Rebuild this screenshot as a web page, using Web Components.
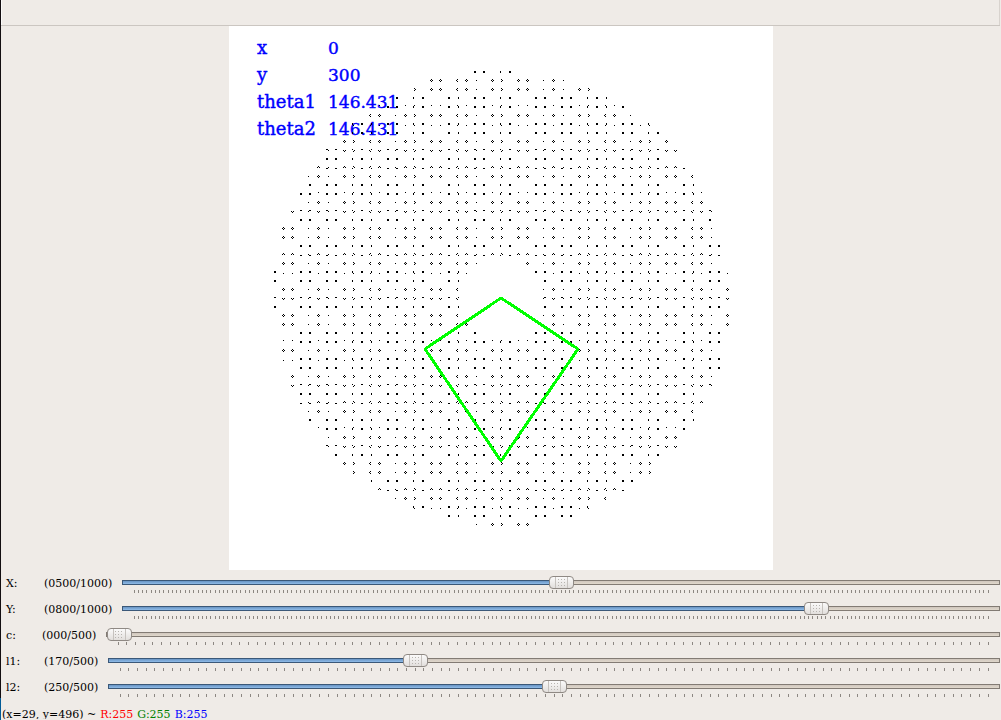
<!DOCTYPE html>
<html lang="en">
<head>
<meta charset="utf-8">
<title>Five-bar linkage</title>
<style>
html, body { margin: 0; background: #efebe7; }
body { font: 11px/16px "DejaVu Serif", serif; color: #000; }
</style>
</head>
<body>
<viewer-window>
  <tool-strip slot="tools"></tool-strip>
  <linkage-plot slot="view" x="0" y="300" theta1="146.431" theta2="146.431"></linkage-plot>
  <track-bar name="X" value="500" max="1000"></track-bar>
  <track-bar name="Y" value="800" max="1000"></track-bar>
  <track-bar name="c" value="0" max="500"></track-bar>
  <track-bar name="l1" value="170" max="500"></track-bar>
  <track-bar name="l2" value="250" max="500"></track-bar>
  <pixel-status slot="status"></pixel-status>
</viewer-window>
<script>
customElements.define('viewer-window', class extends HTMLElement {
  constructor() {
    super();
    this.attachShadow({ mode: 'open' }).innerHTML = `
      <style>
        :host { display: grid; grid-template-columns: 1px minmax(0, 1fr) 1px; }
        .edge { background: linear-gradient(#120d10 0 698px, #005a96 698px); }
        main { display: flex; flex-direction: column; }
      </style>
      <div class="edge"></div>
      <main>
        <slot name="tools"></slot>
        <slot name="view"></slot>
        <slot></slot>
        <slot name="status"></slot>
      </main>`;
  }
});

customElements.define('tool-strip', class extends HTMLElement {
  constructor() {
    super();
    this.attachShadow({ mode: 'open' }).innerHTML = `
      <style>
        :host { display: block; height: 25px; border-bottom: 1px solid #cbc6c1; }
        div { height: 100%; border-left: 1px solid #fbfaf9; border-right: 1px solid #d8d3ce; }
      </style><div></div>`;
  }
});

customElements.define('linkage-plot', class extends HTMLElement {
  connectedCallback() {
    const size = 544, world = 1000;
    const sample = p => Math.floor((p + 0.5) * world / size);
    // Reachable grid points between radius l2-l1 and l1+l2, each a small diamond ring.
    const on = (u, v) => {
      const gx = Math.round((u - 500) / 16) * 16, gy = Math.round((v - 500) / 16) * 16;
      const r = Math.hypot(gx, gy);
      return r >= 80 && r <= 420 && Math.abs(u - 500 - gx) + Math.abs(v - 500 - gy) === 2;
    };
    let dots = '';
    for (let j = 0; j < size; j++)
      for (let i = 0; i < size; i++)
        if (on(sample(i), sample(j))) dots += `M${i} ${j}h1v1h-1z`;
    const rows = ['x', 'y', 'theta1', 'theta2'].map((k, i) =>
      `<text class="k" x="28" y="${28 + i * 27}">${k}</text><text x="99" y="${28 + i * 27}">${this.getAttribute(k)}</text>`).join('');
    this.attachShadow({ mode: 'open' }).innerHTML = `
      <style>
        :host { display: flex; justify-content: center; }
        svg { display: block; background: #fff; font-size: 17px; }
        text { fill: #00f; stroke: #00f; stroke-width: .4px; }
        .k { font-size: 18px; }
      </style>
      <svg width="${size}" height="${size}" viewBox="0 0 ${size} ${size}" role="img" aria-label="Linkage workspace">
        ${rows}
        <path d="${dots}" shape-rendering="crispEdges"/>
        <path d="M272 272L196 323L272 435L349 323Z" fill="none" stroke="#0f0" stroke-width="3" stroke-linejoin="round" shape-rendering="crispEdges"/>
      </svg>`;
  }
});

customElements.define('track-bar', class extends HTMLElement {
  connectedCallback() {
    const name = this.getAttribute('name'), max = +this.getAttribute('max');
    const value = +this.getAttribute('value');
    const digits = String(max).length, steps = max === 1000 ? 200 : 100;
    let ticks = '';
    for (let i = 0; i <= steps; i++) ticks += `M${i} 0V3`;
    this.attachShadow({ mode: 'open' }).innerHTML = `
      <style>
        :host { display: grid; grid-template-columns: ${name === 'c' ? 36 : 38}px ${digits === 4 ? 78 : 64}px minmax(0, 1fr);
          height: 26px; padding-left: 5px; }
        label, output { line-height: 28px; white-space: nowrap; }
        .scale { display: flex; flex-direction: column; padding-top: 6px; }
        .wrap { position: relative; --at: calc((100% - 25px) * ${value / max}); }
        input { appearance: none; -webkit-appearance: none; display: block; width: 100%; height: 13px; margin: 0; background: none; }
        input::-webkit-slider-runnable-track { box-sizing: border-box; height: 5px; border: 1px solid #827b74;
          background: linear-gradient(#cfc6bd, #e0d8cc); }
        input::-webkit-slider-thumb { -webkit-appearance: none; box-sizing: border-box; width: 25px; height: 13px; margin-top: -5px;
          border: 1px solid #8f8984; border-radius: 4px;
          background:
            linear-gradient(#c6c2be, #c6c2be) 5px 0 / 1px 100% no-repeat,
            linear-gradient(#c6c2be, #c6c2be) 17px 0 / 1px 100% no-repeat,
            linear-gradient(#fbfafa, #e2dfdc); }
        .blue, .grip { position: absolute; pointer-events: none; }
        .grip { top: 3px; left: calc(var(--at) + 9px); fill: #b8b4b0; }
        .blue { left: 0; top: 4px; height: 5px; box-sizing: border-box; width: var(--at);
          border: 1px solid #3b5878; border-right: 0; background: linear-gradient(#6894c4, #90bce8); }
        .ticks { display: block; height: 3px; margin: 1px 12px 0; overflow: visible; }
        .ticks path { stroke: #8c8782; stroke-width: 1px; vector-effect: non-scaling-stroke; shape-rendering: crispEdges; }
      </style>
      <label for="r">${name}:</label>
      <output for="r">(${String(value).padStart(digits, '0')}/${max})</output>
      <div class="scale">
        <div class="wrap">
          <input id="r" type="range" min="0" max="${max}" value="${value}">
          ${value ? '<div class="blue"></div>' : ''}
          <svg class="grip" width="7" height="7" shape-rendering="crispEdges" aria-hidden="true"><path d="M0 0h1v1h-1zM3 0h1v1h-1zM6 0h1v1h-1zM0 3h1v1h-1zM3 3h1v1h-1zM6 3h1v1h-1zM0 6h1v1h-1zM3 6h1v1h-1zM6 6h1v1h-1z"/></svg>
        </div>
        <svg class="ticks" viewBox="0 0 ${steps} 3" preserveAspectRatio="none" aria-hidden="true"><path d="${ticks}"/></svg>
      </div>`;
    const input = this.shadowRoot.querySelector('input');
    input.addEventListener('input', () => {
      this.shadowRoot.querySelector('.wrap').style.setProperty('--at', `calc((100% - 25px) * ${input.value / max})`);
      this.shadowRoot.querySelector('output').textContent = `(${input.value.padStart(digits, '0')}/${max})`;
    });
  }
});

customElements.define('pixel-status', class extends HTMLElement {
  constructor() {
    super();
    this.attachShadow({ mode: 'open' }).innerHTML = `
      <style>
        :host { display: block; height: 20px; }
        p { display: flex; gap: 4px; margin: 0 0 0 1px; padding-top: 9px; line-height: 11px; white-space: nowrap; }
        .pos { height: 10px; overflow: hidden; }
        .r { color: #f00; } .g { color: #008000; } .b { color: #00f; }
      </style>
      <p><span class="pos">(x=29, y=496) ~</span><span class="r">R:255</span><span class="g">G:255</span><span class="b">B:255</span></p>`;
  }
});
</script>
</body>
</html>
